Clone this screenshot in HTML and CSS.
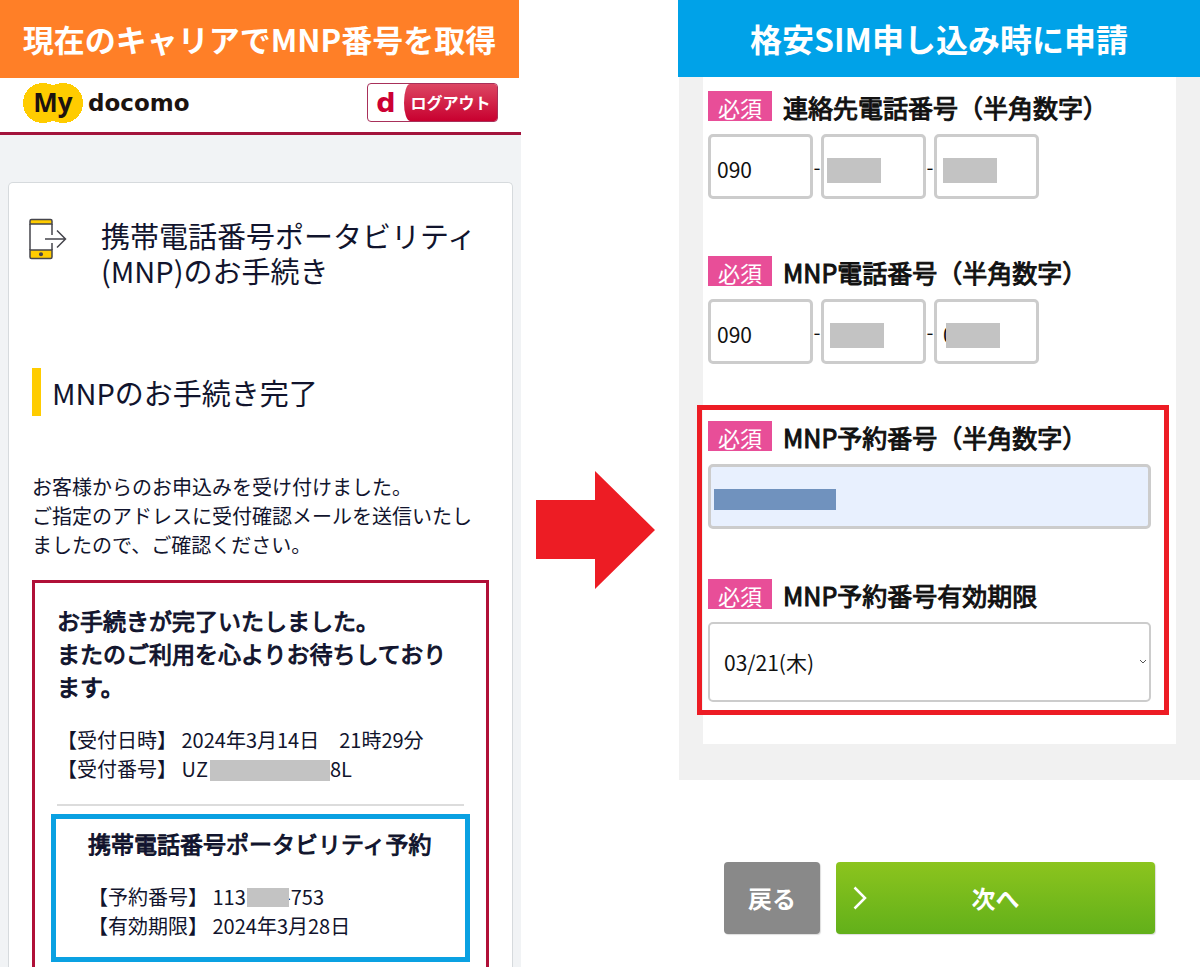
FILE: index.html
```html
<!DOCTYPE html>
<html lang="ja">
<head>
    <meta charset="utf-8">
    <title>MNP</title>
    <link rel="stylesheet" href="styles.css">
</head>

<body>

  <main class="steps">

    <section class="step step-left">
      <h1 class="banner orange">現在のキャリアでMNP番号を取得</h1>

      <header class="site-header">
        <a href="#" class="logo">
          <span class="logo-my">My</span>
          <span class="logo-name">docomo</span>
        </a>
        <button type="button" class="logout"><span class="logout-d">d</span><span class="logout-text">ログアウト</span></button>
      </header>

      <div class="account">
        <div class="card">
          <div class="card-title">
            <svg class="phone" width="40" height="42" viewBox="0 0 40 42" fill="none" stroke="#45454c" stroke-width="1.5">
              <path d="M2 6V3q0-1.500 1.500-1.500h19q1.500 0 1.500 1.500v3z" fill="#fc0"/>
              <path d="M2 32h22v7q0 1.500-1.500 1.500h-19q-1.500 0-1.500-1.500z" fill="#fc0"/>
              <path d="M2 6v26M24 6v11M24 25v7M17 21h20.500M29 12.500l8.500 8.500-8.500 8.500"/>
              <circle cx="13" cy="36.200" r="1.300" fill="#45454c"/>
            </svg>
            <h2>携帯電話番号ポータビリティ<br>(MNP)のお手続き</h2>
          </div>

          <h3 class="section-title">MNPのお手続き完了</h3>

          <p class="lead">お客様からのお申込みを受け付けました。<br>ご指定のアドレスに受付確認メールを送信いたし<br>ましたので、ご確認ください。</p>

          <div class="result">
            <p class="strong">お手続きが完了いたしました。<br>またのご利用を心よりお待ちしており<br>ます。</p>
            <p class="details">【受付日時】 2024年3月14日　21時29分<br>【受付番号】 UZ<span class="mask mask-long"></span>8L</p>
            <hr>
            <div class="reserve">
              <h4 class="strong">携帯電話番号ポータビリティ予約</h4>
              <p class="details">【予約番号】 113<span class="mask mask-short"></span>-753<br>【有効期限】 2024年3月28日</p>
            </div>
          </div>
        </div>
      </div>
    </section>

    <div class="arrow">
      <svg width="120" height="120" viewBox="0 0 120 120">
        <path d="M0 30h59V1l60 59-60 59V89H0z" fill="#ed1c24"/>
      </svg>
    </div>

    <section class="step step-right">
      <h1 class="banner blue">格安SIM申し込み時に申請</h1>

      <form>
        <div class="form-bg">
          <div class="form-panel">

            <div class="field">
              <label for="tel1"><span class="badge">必須</span>連絡先電話番号（半角数字）</label>
              <div class="tel">
                <input type="text" id="tel1" value="090"><span class="dash">-</span>
                <div class="masked"><input type="text" aria-label="電話番号2"><span class="mask cover cover-a"></span></div><span class="dash">-</span>
                <div class="masked"><input type="text" aria-label="電話番号3"><span class="mask cover cover-b"></span></div>
              </div>
            </div>

            <div class="field">
              <label for="mnp1"><span class="badge">必須</span>MNP電話番号（半角数字）</label>
              <div class="tel">
                <input type="text" id="mnp1" value="090"><span class="dash">-</span>
                <div class="masked"><input type="text" aria-label="MNP電話番号2"><span class="mask cover cover-b"></span></div><span class="dash">-</span>
                <div class="masked"><input type="text" aria-label="MNP電話番号3" value="0"><span class="mask cover cover-c"></span></div>
              </div>
            </div>

            <div class="highlight">
              <div class="field">
                <label for="reserveNo"><span class="badge">必須</span>MNP予約番号（半角数字）</label>
                <div class="masked"><input type="text" id="reserveNo" class="filled"><span class="mask cover cover-blue"></span></div>
              </div>
              <div class="field">
                <label for="expire"><span class="badge">必須</span>MNP予約番号有効期限</label>
                <div class="masked">
                  <select id="expire">
                    <option>03/21(木)</option>
                  </select>
                  <svg class="chevron" width="8" height="6" viewBox="0 0 8 6" fill="none" stroke="#555">
                    <path d="M1 1l3 3 3-3"/>
                  </svg>
                </div>
              </div>
            </div>

          </div>
        </div>

        <div class="buttons">
          <button type="button" class="btn btn-back">戻る</button>
          <button type="submit" class="btn btn-next">
            <svg class="next-icon" width="14" height="24" viewBox="0 0 14 24" fill="none" stroke="#fff" stroke-width="2.500">
              <path d="M1.500 1.500L12 12 1.500 22.500"/>
            </svg>
            次へ
          </button>
        </div>
      </form>
    </section>

  </main>

</body>

</html>
```
FILE: styles.css
```css
* {
  box-sizing: border-box;
}

body {
  margin: 0;
  background: #fff;
  color: #11142d;
  font-family: 'Noto Sans CJK JP', sans-serif;
}

h1, h2, h3, h4, p {
  margin: 0;
  font-weight: 400;
}

.steps {
  display: grid;
  grid-template-columns: 521fr 157px 522fr;
  min-height: 100vh;
}

.step {
  display: flex;
  flex-direction: column;
}

.banner {
  color: #fff;
  font-size: 31px;
  font-weight: 700;
  line-height: 78px;
  text-align: center;
  white-space: nowrap;
}
.orange {
  background: #ff7f27;
  margin-right: 2px;
}
.blue {
  background: #00a2e8;
  font-size: 32px;
  line-height: 77px;
}

/* docomo header */
.site-header {
  display: flex;
  justify-content: space-between;
  align-items: center;
  height: 57px;
  padding: 0 23px 5px;
  border-bottom: 3px solid #a3133c;
}
.logo {
  display: flex;
  align-items: center;
  gap: 5px;
  color: #1c1310;
  font-family: 'DejaVu Sans', sans-serif;
  font-weight: 700;
  text-decoration: none;
}
.logo-my {
  width: 60px;
  height: 40px;
  background: radial-gradient(circle at 20px 20px, #fc0 20px, transparent 20px),
    radial-gradient(circle at 40px 20px, #fc0 20px, transparent 20px);
  font-family: 'Open Sans', sans-serif;
  font-size: 26px;
  line-height: 38px;
  text-align: center;
}
.logo-name {
  font-size: 23px;
  line-height: 38px;
}
.logout {
  display: flex;
  width: 131px;
  height: 39px;
  padding: 0;
  border: 1px solid #a8305a;
  border-radius: 4px;
  background: #fff;
}
.logout-d {
  width: 36px;
  color: #cc0033;
  font-family: 'DejaVu Sans', sans-serif;
  font-size: 27px;
  font-weight: 700;
  line-height: 37px;
}
.logout-text {
  flex: 1;
  background: linear-gradient(#dc4763, #c8002f);
  border-radius: 6px 3px 3px 6px / 50% 3px 3px 50%;
  color: #fff;
  font-family: 'Noto Sans CJK JP', sans-serif;
  font-size: 16px;
  font-weight: 700;
  line-height: 37px;
}

/* account page */
.account {
  flex: 1;
  display: flex;
  padding: 47px 8px 0;
  background: #f1f3f5;
}
.card {
  flex: 1;
  display: flex;
  flex-direction: column;
  padding: 35px 23px 0;
  background: #fff;
  border: 1px solid #d6dadd;
  border-bottom: 0;
  border-radius: 5px 5px 0 0;
}
.card-title {
  display: flex;
  gap: 33px;
  margin-left: -4px;
}
.card-title h2 {
  font-size: 29px;
  line-height: 35px;
  white-space: nowrap;
}
.section-title {
  margin-top: 80px;
  padding-left: 11px;
  border-left: 9px solid #fc0;
  font-size: 29px;
  line-height: 48px;
}
.lead {
  margin-top: 56px;
  font-size: 20px;
  line-height: 29px;
  white-space: nowrap;
}
.result {
  flex: 1;
  margin-top: 21px;
  padding: 21px 22px 0;
  border: 3px solid #b01038;
  border-bottom: 0;
}
.strong,
.field label {
  -webkit-text-stroke: 1px;
  white-space: nowrap;
}
.strong {
  font-size: 23px;
  line-height: 33px;
}
.details {
  margin-top: 22px;
  font-size: 20px;
  line-height: 29px;
  white-space: nowrap;
}
hr {
  margin: 21px 0 8px;
  border: 0;
  border-top: 2px solid #dcdcdc;
}
.reserve {
  margin: 0 -6px;
  padding: 8px 31px 17px 32px;
  border: 5px solid #0aa1e2;
}

.mask {
  display: inline-block;
  background: #c3c3c3;
}
.mask-long {
  width: 120px;
  height: 21px;
  margin-left: 2px;
  vertical-align: -4px;
}
.mask-short {
  position: relative;
  width: 42px;
  height: 19px;
  margin: 0 -5px 0 1px;
  vertical-align: -2px;
}

.arrow {
  display: flex;
  align-items: center;
  padding: 92px 0 0 15px;
}

/* application form */
.form-bg {
  margin-left: 1px;
  padding: 0 24px 36px;
  background: #f1f1f1;
}
.form-panel {
  padding: 14px 25px 29px 5px;
  background: #fff;
}
.field {
  margin-bottom: 57px;
}
.field label {
  display: flex;
  gap: 11px;
  height: 30px;
  margin-bottom: 13px;
  color: #111;
  font-size: 25px;
  line-height: 33px;
}
.badge {
  width: 64px;
  height: 30px;
  background: #e84e98;
  color: #fff;
  font-size: 22px;
  line-height: 32px;
  text-align: center;
  -webkit-text-stroke: 0;
}
.tel {
  display: flex;
}
.dash {
  width: 8px;
  color: #111;
  font-size: 20px;
  line-height: 65px;
  text-align: center;
}
input,
select {
  width: 100%;
  height: 65px;
  padding: 4px 6px 0;
  border: 3px solid #ccc;
  border-radius: 5px;
  background: #fff;
  color: #111;
  font-family: inherit;
  font-size: 21px;
}
select {
  height: 80px;
  padding: 0 14px;
  border-width: 2px;
  appearance: none;
}
.filled {
  background: #e8f0fe;
}
.tel input {
  width: 105px;
}
.masked {
  position: relative;
}
.cover {
  position: absolute;
  top: 24px;
  left: 6px;
  width: 54px;
  height: 25px;
}
.cover-b {
  left: 9px;
}
.cover-c {
  left: 12px;
}
.cover-blue {
  top: 25px;
  width: 122px;
  height: 21px;
  background: #7092be;
}
.chevron {
  position: absolute;
  top: 37px;
  right: 4px;
}

.highlight {
  margin: -16px -18px 0 -11px;
  padding: 11px 13px 8px 6px;
  border: 5px solid #ed1c24;
}
.highlight .field {
  margin-bottom: 50px;
}
.highlight .field:last-child {
  margin-bottom: 0;
}

.buttons {
  display: flex;
  gap: 16px;
  padding: 82px 45px 0 46px;
}
.btn {
  height: 72px;
  padding: 0;
  border: 0;
  border-radius: 4px;
  box-shadow: 1px 1px 1px #ddd;
  color: #fff;
  font-family: inherit;
  font-size: 24px;
  font-weight: 700;
  line-height: 72px;
}
.btn-back {
  width: 96px;
  background: #898989;
}
.btn-next {
  position: relative;
  flex: 1;
  background: linear-gradient(#8cc41e, #62b01a);
}
.next-icon {
  position: absolute;
  top: 24px;
  left: 17px;
}
```
